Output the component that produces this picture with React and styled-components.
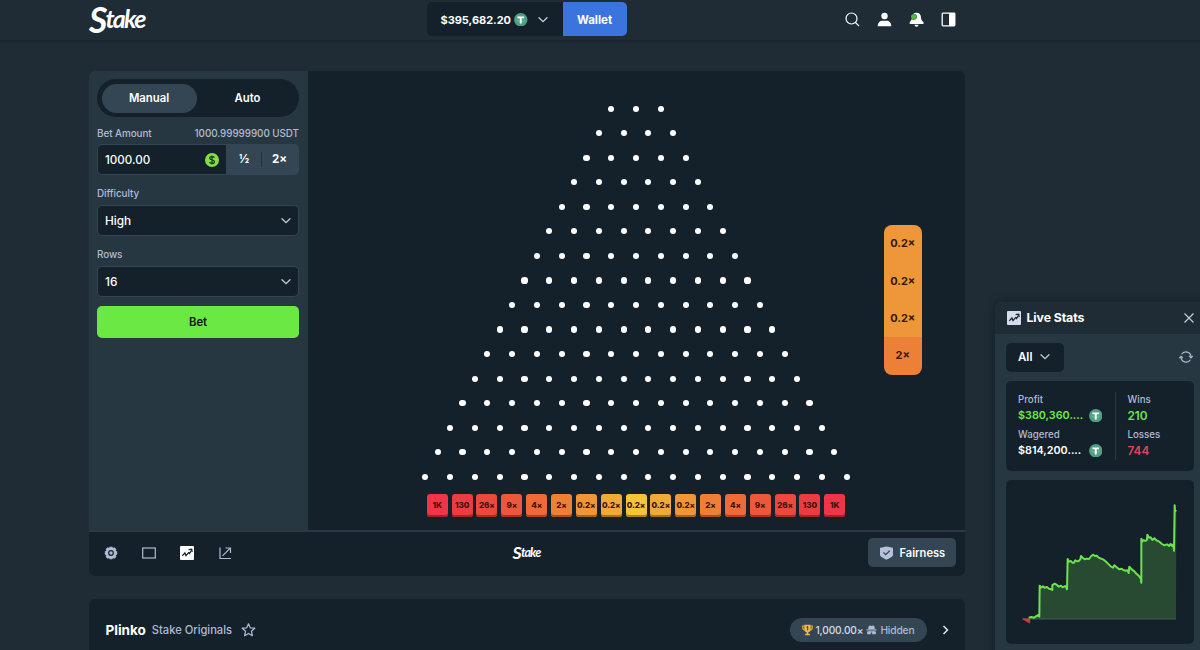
import React from 'react';
import styled, { createGlobalStyle } from 'styled-components';

const GlobalStyle = createGlobalStyle`
  * {
    box-sizing: border-box;
  }

  body {
    margin: 0;
    height: 650px;
    overflow: hidden;
    background-color: #1f2c36;
    color: #fff;
    font-family: Inter, 'Open Sans', sans-serif;
    font-size: 11px;
    font-weight: 600;
  }

  svg {
    display: block;
    flex-shrink: 0;
  }
`;

const Header = styled.header`
  display: grid;
  grid-template-columns: 1fr auto 1fr;
  height: 41px;
  padding: 0 236px 0 89px;
  border-bottom: 1px solid #1a252e;
  box-shadow: 0 1px 3px rgba(12, 22, 30, 0.4);
`;

const Logo = styled.div`
  height: ${(p) => p.$height}px;
  margin-left: ${(p) => p.$left || 0}px;
  font-family: Lato, sans-serif;
  font-style: italic;
  font-weight: 700;
  font-size: ${(p) => p.$size}px;
  line-height: ${(p) => p.$height}px;
  letter-spacing: -0.07em;
  white-space: nowrap;

  &::first-letter {
    font-size: 1.45em;
    line-height: 1px;
  }
`;

const BigLetter = styled.span`
  display: inline-block;
  font-size: 1.42em;
  line-height: 1px;
  transform: translateY(0.13em);
`;

const Balance = styled.div`
  display: flex;
  height: 34px;
  margin-top: 2px;
`;

const Amount = styled.div`
  display: flex;
  align-items: center;
  width: 136px;
  padding: 1px 0 0 14px;
  border-radius: 5px 0 0 5px;
  background-color: #14212b;
  font-size: 11px;
  font-weight: 700;
  letter-spacing: -0.03px;

  svg:nth-of-type(1) {
    margin: 0 10px 0 3px;
  }
`;

const WalletButton = styled.button`
  width: 64px;
  padding: 1px 0 0;
  border: 0;
  border-radius: 0 5px 5px 0;
  background-color: #3b74dc;
  color: #fff;
  font: 700 11.5px Inter, sans-serif;
`;

const HeaderIcons = styled.div`
  display: flex;
  align-items: center;
  justify-content: flex-end;
  gap: 17px;
  height: 38px;
  padding-right: 8px;
`;

const Main = styled.main`
  width: 876px;
  margin: 29.5px 0 0 88.5px;
`;

const Game = styled.section`
  border-radius: 6px;
  overflow: hidden;
  background-color: #14212b;
`;

const GameBody = styled.div`
  display: flex;
  height: 459px;
`;

const Sidebar = styled.aside`
  display: flex;
  flex-direction: column;
  width: 219px;
  padding: 8.5px 8.5px 0;
  background-color: #273741;
`;

const Toggle = styled.div`
  display: flex;
  height: 38px;
  padding: 4.5px 5px 4px 4.5px;
  border-radius: 19px;
  background-color: #14212b;
`;

const ToggleItem = styled.button`
  flex: 0 0 ${(p) => (p.$active ? 95 : 102)}px;
  padding: 0;
  border: 0;
  border-radius: 15px;
  background-color: ${(p) => (p.$active ? '#344653' : 'transparent')};
  color: #fff;
  font: 600 11.3px Inter, sans-serif;
`;

const Label = styled.div`
  display: flex;
  justify-content: space-between;
  height: 14px;
  margin: ${(p) => p.$top}px 0 ${(p) => p.$bottom || 5}px;
  color: #b1bad3;
  font-size: 9.9px;
  line-height: 14px;
  font-weight: 500;
  letter-spacing: -0.06px;
`;

const BetRow = styled.div`
  display: flex;
  height: 31px;
  border-radius: 5px;
  overflow: hidden;
  background-color: #344653;
`;

const BetInput = styled.div`
  display: flex;
  align-items: center;
  justify-content: space-between;
  width: 130px;
  padding: 0 7px;
  border: 1.5px solid #344653;
  border-radius: 5px 0 0 5px;
  background-color: #14212b;
  font-size: 11.6px;
  font-weight: 500;
`;

const Half = styled.div`
  width: 35px;
  margin: 8px 0;
  border-right: ${(p) => (p.$last ? 0 : 1)}px solid #22303a;
  text-align: center;
  line-height: 15px;
  font-size: 11.5px;
  font-weight: 700;
`;

const Select = styled.div`
  display: flex;
  align-items: center;
  justify-content: space-between;
  height: 31px;
  padding: 0 7px;
  border: 1.5px solid #344653;
  border-radius: 5px;
  background-color: #14212b;
  font-size: 11.8px;
  font-weight: 500;
`;

const BetButton = styled.button`
  height: 32px;
  margin-top: 9px;
  border: 0;
  border-radius: 5px;
  background-color: #6ce843;
  color: #08160b;
  font: 600 11.3px Inter, sans-serif;
`;

const Board = styled.div`
  display: grid;
  grid-template-columns: 1fr 440px 1fr;
  flex: 1;
`;

const Pyramid = styled.div`
  grid-column: 2;
  padding-top: 35px;
`;

const PegRow = styled.div`
  display: flex;
  justify-content: center;
  gap: 18.62px;
  height: 24.56px;
`;

const Peg = styled.i`
  width: 6.2px;
  height: 6.2px;
  border-radius: 50%;
  background-color: #fff;
`;

const Buckets = styled.div`
  display: flex;
  justify-content: center;
  gap: 3.85px;
  margin-top: -4.5px;
`;

const Bucket = styled.div`
  width: 21px;
  height: 23px;
  border-radius: 3px;
  background-color: ${(p) => p.$color};
  box-shadow: inset 0 -2px 0 ${(p) => p.$edge};
  color: #3b1209;
  font-size: 8.1px;
  font-weight: 800;
  line-height: 22px;
  letter-spacing: -0.1px;
  text-align: center;
  white-space: nowrap;
`;

const Results = styled.div`
  align-self: center;
  width: 37.5px;
  margin-left: 28px;
  border-radius: 8px;
  overflow: hidden;
`;

const Result = styled.div`
  height: 37.4px;
  background-color: ${(p) => p.$color};
  color: #351806;
  font-size: 11px;
  font-weight: 700;
  line-height: 37px;
  text-align: center;
`;

const GameFooter = styled.div`
  display: grid;
  grid-template-columns: 1fr auto 1fr;
  align-items: center;
  height: 46px;
  padding: 0 9px 2px 15px;
  border-top: 2px solid #2a3943;
`;

const Tools = styled.div`
  display: flex;
  align-items: center;
  gap: 24px;
`;

const FairnessButton = styled.button`
  display: flex;
  align-items: center;
  justify-self: end;
  gap: 7px;
  width: 88px;
  height: 29px;
  padding: 0 0 0 12px;
  border: 0;
  border-radius: 5px;
  background-color: #344653;
  color: #fff;
  font: 600 11.1px Inter, sans-serif;
`;

const InfoCard = styled.section`
  display: flex;
  align-items: center;
  height: 70px;
  margin-top: 23.5px;
  padding: 0 15px 9px 17px;
  border-radius: 6px;
  background-color: #14212b;
`;

const GameName = styled.span`
  font-size: 13.6px;
  font-weight: 700;
  letter-spacing: -0.05px;
`;

const Studio = styled.span`
  margin: 1px 9px 0 6px;
  color: #b1bad3;
  font-size: 11.2px;
  font-weight: 500;
  letter-spacing: -0.02px;
`;

const BestWin = styled.div`
  display: flex;
  align-items: center;
  gap: 3px;
  width: 137px;
  height: 24px;
  margin: 0 14px 0 auto;
  padding-left: 12px;
  border-radius: 12px;
  background-color: #344653;
  color: #d3daea;
  font-size: 10.2px;
  font-weight: 500;
  letter-spacing: -0.15px;
  white-space: nowrap;
`;

const Hidden = styled.span`
  color: #b1bad3;
`;

// floats over the page, partly past the right edge
const StatsWindow = styled.aside`
  position: absolute;
  top: 301.5px;
  left: 995px;
  width: 209px;
  height: 360px;
  border-radius: 6px 0 0 0;
  background-color: #273741;
  box-shadow: 0 0 9px rgba(10, 20, 28, 0.55);
  overflow: hidden;
`;

const StatsHeader = styled.div`
  display: flex;
  align-items: center;
  gap: 6px;
  height: 32px;
  padding: 0 9px 0 11.5px;
  background-color: #1f2c36;
  font-size: 12.3px;
  font-weight: 700;
  letter-spacing: -0.1px;

  svg:last-child {
    margin-left: auto;
  }
`;

const StatsFilter = styled.div`
  display: flex;
  align-items: center;
  justify-content: space-between;
  padding: 9px 11px 9px 11px;
`;

const FilterButton = styled.div`
  display: flex;
  align-items: center;
  gap: 8px;
  width: 58px;
  height: 29px;
  padding-left: 12px;
  border-radius: 5px;
  background-color: #14212b;
  font-size: 11.5px;
`;

const StatsCard = styled.div`
  display: flex;
  width: 188px;
  height: 90px;
  margin-left: 11px;
  padding: 11px 12px;
  border-radius: 5px;
  background-color: #14212b;
`;

const StatsColumn = styled.div`
  width: ${(p) => p.$width}px;
  height: 68px;
  padding-left: ${(p) => (p.$divider ? 11.5 : 0)}px;
  border-left: ${(p) => (p.$divider ? '1px solid #293842' : '0')};
`;

const StatLabel = styled.div`
  height: 16px;
  color: #b1bad3;
  font-size: 9.7px;
  font-weight: 500;
  line-height: 16px;
`;

const StatValue = styled.div`
  display: flex;
  align-items: center;
  justify-content: space-between;
  height: 16px;
  margin-bottom: 3px;
  padding-right: 13px;
  color: ${(p) => p.$color};
  font-size: ${(p) => p.$size || 11.8}px;
  line-height: 16px;
`;

const ChartCard = styled.div`
  width: 188px;
  height: 164px;
  margin: 9px 0 0 11px;
  border-radius: 5px;
  background-color: #14212b;
`;

const Tether = ({ size = 13.5 }) => (
  <svg width={size} height={size} viewBox="0 0 26 26">
    <circle cx="13" cy="13" r="13" fill="#4fa083" />
    <path d="M6.500 6.500h13v3.600h-4.600V20h-3.800v-9.900H6.500z" fill="#fff" />
    <path d="M8 13.200c-3.500 1-2 2.600 5 2.600s8.500-1.600 5-2.600" fill="none" stroke="#fff" strokeOpacity=".45" strokeWidth="1" />
  </svg>
);

const Chevron = ({ size = 10, color = '#c4cddd' }) => (
  <svg width={size} height={size} viewBox="0 0 10 10" fill="none" stroke={color} strokeWidth="1.3" strokeLinecap="round">
    <path d="M1 2.700l4 4 4-4" />
  </svg>
);

const TrendIcon = ({ color = '#fff' }) => (
  <svg width="14" height="14" viewBox="0 0 14 14">
    <rect width="14" height="14" rx="1" fill={color} />
    <path d="M2.300 9.900l2.600-3 1.100 2.700 2.600-3 1 .9 1.900-3.300" fill="none" stroke="#14212b" strokeWidth="1.200" />
    <path d="M8.600 3.600l3.100-.5.5 3.100" fill="none" stroke="#14212b" strokeWidth="1.200" />
  </svg>
);

const PEG_ROWS = Array.from({ length: 16 }, (_, i) => i + 3);

const HALF = [
  ['1K', '#ee3549', '#a32425'],
  ['130', '#ec3c43', '#a32821'],
  ['26×', '#ec493e', '#a5301e'],
  ['9×', '#ed583a', '#a83417'],
  ['4×', '#ee6b38', '#aa4217'],
  ['2×', '#ed8035', '#a85014'],
  ['0.2×', '#ee9638', '#a86215'],
  ['0.2×', '#efab39', '#a97314'],
];

const BUCKETS = [...HALF, ['0.2×', '#f4c43a', '#ac8516'], ...[...HALF].reverse()];

const LINE =
  'M116 440L124 438 132 440 138 436 144 432 148 437 149 344 153 350 159 346 164 350 171 348 177 353 184 355 187 357 187 342 194 338 199 341 207 347 213 344 218 349 225 345 229 349 231 355 233 264 237 272 243 270 247 275 252 275 256 268 262 271 266 270 271 265 273 255 278 260 284 265 290 263 297 264 304 255 309 251 315 255 320 254 326 260 333 263 341 266 350 274 357 281 363 287 369 290 373 283 380 289 387 295 395 293 400 297 407 299 412 298 416 306 418 287 425 295 433 301 440 309 447 315 452 322 454 335 454 203 457 212 461 207 466 210 471 206 472 191 477 200 482 199 487 207 493 202 501 209 508 212 516 219 523 223 531 220 537 225 542 219 547 225 550 220 552 239 554 103 555 118 559 121';

function App() {
  return (
    <>
      <GlobalStyle />
      <Header>
        <Logo $size={25} $height={36}>
          <BigLetter>S</BigLetter>take
        </Logo>
        <Balance>
          <Amount>
            $395,682.20
            <Tether />
            <Chevron />
          </Amount>
          <WalletButton>Wallet</WalletButton>
        </Balance>
        <HeaderIcons>
          <svg width="15" height="15" viewBox="0 0 15 15" fill="none" stroke="#fff" strokeWidth="1.200">
            <circle cx="6.500" cy="6.500" r="5.500" />
            <path d="M10.500 10.500l3.600 3.600" />
          </svg>
          <svg width="15" height="15" viewBox="0 0 15 15" fill="#fff">
            <circle cx="7.500" cy="4" r="3.200" />
            <path d="M.7 14.200C.7 10.500 3 8.700 5.500 8.700h4c2.500 0 4.800 1.800 4.800 5.500z" />
          </svg>
          <svg width="15" height="15" viewBox="0 0 15 15">
            <path d="M7.500.8c3 0 4.300 2 4.500 4.800.1 2 1 3.500 2.500 4.500v2H.7v-2C2.200 9 2.900 7.500 3 5.600 3.200 2.800 4.500.8 7.500.8zM5.500 12.800h4a2 2 0 0 1-4 0z" fill="#fff" />
            <circle cx="4.800" cy="4.700" r="3" fill="#1f2c36" />
            <circle cx="4.800" cy="4.700" r="2.700" fill="#4fbd3c" />
          </svg>
          <svg width="15" height="15" viewBox="0 0 15 15">
            <rect x="1.200" y="1.200" width="12.600" height="12.600" rx=".8" fill="none" stroke="#fff" strokeWidth="1.300" />
            <path d="M8 1h6v13H8z" fill="#fff" />
          </svg>
        </HeaderIcons>
      </Header>

      <Main>
        <Game>
          <GameBody>
            <Sidebar>
              <Toggle>
                <ToggleItem $active>Manual</ToggleItem>
                <ToggleItem>Auto</ToggleItem>
              </Toggle>
              <Label $top={9} $bottom={4}>
                <span>Bet Amount</span>
                <span>1000.99999900 USDT</span>
              </Label>
              <BetRow>
                <BetInput>
                  1000.00
                  <svg width="14" height="14" viewBox="0 0 14 14">
                    <circle cx="7" cy="7" r="7" fill="#82df45" />
                    <path d="M9.400 4.800C9 3.900 8 3.700 7 3.700c-1.300 0-2.300.5-2.300 1.600 0 2.300 4.800.9 4.800 3.400 0 1.100-1.100 1.700-2.500 1.700-1.200 0-2.200-.4-2.500-1.400M7 2.500v9" fill="none" stroke="#173620" strokeWidth="1.200" />
                  </svg>
                </BetInput>
                <Half>½</Half>
                <Half $last>2×</Half>
              </BetRow>
              <Label $top={11}>Difficulty</Label>
              <Select>
                High
                <Chevron />
              </Select>
              <Label $top={11}>Rows</Label>
              <Select>
                16
                <Chevron />
              </Select>
              <BetButton>Bet</BetButton>
            </Sidebar>

            <Board>
              <Pyramid>
                {PEG_ROWS.map((count) => (
                  <PegRow key={count}>
                    {Array.from({ length: count }, (_, i) => (
                      <Peg key={i} />
                    ))}
                  </PegRow>
                ))}
                <Buckets>
                  {BUCKETS.map(([text, color, edge], i) => (
                    <Bucket key={i} $color={color} $edge={edge}>{text}</Bucket>
                  ))}
                </Buckets>
              </Pyramid>
              <Results>
                <Result $color="#ee9739">0.2×</Result>
                <Result $color="#ee9739">0.2×</Result>
                <Result $color="#ee9739">0.2×</Result>
                <Result $color="#ed8037">2×</Result>
              </Results>
            </Board>
          </GameBody>

          <GameFooter>
            <Tools>
              <svg width="14" height="14" viewBox="0 0 14 14">
                <path d="M5.500.7h3l.4 1.300 1.500-.7 2 2-.7 1.500 1.500.6v3.200l-1.500.6.7 1.500-2 2-1.500-.7-.4 1.300h-3l-.4-1.300-1.500.7-2-2 .7-1.500-1.500-.6V5.400l1.500-.6-.7-1.500 2-2 1.500.7z" fill="#b1bad3" />
                <circle cx="7" cy="7" r="2.900" fill="#14212b" />
                <circle cx="7" cy="7" r="1.700" fill="#b1bad3" />
              </svg>
              <svg width="14" height="14" viewBox="0 0 14 14">
                <rect x=".7" y="2" width="12.600" height="10" fill="none" stroke="#b1bad3" strokeWidth="1.200" />
              </svg>
              <TrendIcon />
              <svg width="14" height="14" viewBox="0 0 14 14" fill="none" stroke="#b1bad3" strokeWidth="1.200">
                <path d="M2 1.500V12.500h11M4.500 9.800L12 2.300M7.500 2h5v5" />
              </svg>
            </Tools>
            <Logo $size={12.5} $height={20} $left={-6}>
              <BigLetter>S</BigLetter>take
            </Logo>
            <FairnessButton>
              <svg width="13" height="14" viewBox="0 0 13 14">
                <path d="M0 1.800C3 1.500 4.500.6 6.500.6S10 1.500 13 1.800V9c0 1.700-4 3.400-6.500 4.700C4 12.400 0 10.700 0 9z" fill="#b8c0da" />
                <path d="M3.500 6.500l2.200 2.200 4-4" fill="none" stroke="#344653" strokeWidth="1.300" />
              </svg>
              Fairness
            </FairnessButton>
          </GameFooter>
        </Game>

        <InfoCard>
          <GameName>Plinko</GameName>
          <Studio>Stake Originals</Studio>
          <svg width="15" height="14" viewBox="0 0 14 14" fill="none" stroke="#b1bad3" strokeWidth="1.200" strokeLinejoin="round">
            <path d="M7 .8l1.800 4 4.500.4-3.400 3 1 4.500L7 10.400l-3.900 2.300 1-4.500-3.400-3 4.500-.4z" />
          </svg>
          <BestWin>
            <svg width="11" height="12" viewBox="0 0 11 12">
              <path d="M2.500 2H.7v1.200c0 2 1 3 2.500 3M8.500 2h1.800v1.200c0 2-1 3-2.500 3" fill="none" stroke="#e8a93e" strokeWidth="1.200" />
              <path d="M2.300.7h6.400v4c0 2-1 3.300-2.400 3.600v1.500h1.500v1.400H3.200V9.800h1.500V8.300C3.300 8 2.300 6.700 2.300 4.700z" fill="#f2b74a" />
              <path d="M4.500 3.200l1.200-.8v4" fill="none" stroke="#30333a" />
            </svg>
            1,000.00×
            <svg width="11" height="10" viewBox="0 0 12 11" fill="#b1bad3">
              <path d="M3 1l1.500-.5L6 1l1.500-.5L9 1l.7 3.500H2.300z" />
              <rect x=".5" y="4.700" width="11" height="1.300" />
              <rect x="1.200" y="7" width="4.100" height="3.300" rx="1" />
              <rect x="6.700" y="7" width="4.100" height="3.300" rx="1" />
              <rect x="3" y="7" width="6" height="1.200" />
            </svg>
            <Hidden>Hidden</Hidden>
          </BestWin>
          <svg width="9" height="10" viewBox="0 0 9 10" fill="none" stroke="#dfe6f1" strokeWidth="1.500">
            <path d="M2.500 1l4 4-4 4" />
          </svg>
        </InfoCard>
      </Main>

      <StatsWindow>
        <StatsHeader>
          <TrendIcon color="#d5dced" />
          Live Stats
          <svg width="12" height="12" viewBox="0 0 12 12" fill="none" stroke="#c4cddd" strokeWidth="1.200">
            <path d="M1.500 1.500l9 9M10.500 1.500l-9 9" />
          </svg>
        </StatsHeader>
        <StatsFilter>
          <FilterButton>
            All
            <Chevron />
          </FilterButton>
          <svg width="14" height="14" viewBox="0 0 14 14" fill="none" stroke="#b1bad3" strokeWidth="1.200">
            <path d="M2.600 4.300A5.100 5.100 0 0 1 12 7M11.400 9.700A5.100 5.100 0 0 1 2 7" />
            <path d="M.2 8.200L2 6.300l1.900 1.900M10.100 5.900L12 7.800l1.800-1.900" />
          </svg>
        </StatsFilter>
        <StatsCard>
          <StatsColumn $width={97}>
            <StatLabel>Profit</StatLabel>
            <StatValue $color="#6ce843" $size={10.8}>$380,360....<Tether /></StatValue>
            <StatLabel>Wagered</StatLabel>
            <StatValue $color="#fff" $size={10.8}>$814,200....<Tether /></StatValue>
          </StatsColumn>
          <StatsColumn $width={67} $divider>
            <StatLabel>Wins</StatLabel>
            <StatValue $color="#6ce843">210</StatValue>
            <StatLabel>Losses</StatLabel>
            <StatValue $color="#de4662">744</StatValue>
          </StatsColumn>
        </StatsCard>
        <ChartCard>
          <svg width="188" height="164" viewBox="48 27 564 492">
            <path d={`${LINE}L558 444H116z`} fill="#284a32" />
            <path d="M98 444H558" stroke="#455a55" strokeWidth="3" />
            <path d="M98 444L119 444 119 456z" fill="#c93b48" stroke="#c93b48" strokeWidth="3" />
            <path d={LINE} fill="none" stroke="#6ce34c" strokeWidth="6" strokeLinejoin="round" />
          </svg>
        </ChartCard>
      </StatsWindow>
    </>
  );
}

export default App;
